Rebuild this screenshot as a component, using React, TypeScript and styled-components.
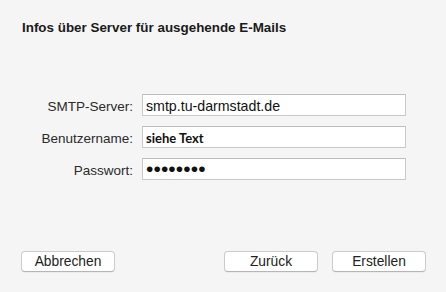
import React from "react";
import styled, { createGlobalStyle } from "styled-components";

const Global = createGlobalStyle`
  html, body { margin: 0; padding: 0; background: #f5f5f5; }
  body { font-family: "Liberation Sans", Arial, sans-serif; }
`;

const Window = styled.div`
  width: 446px;
  height: 292px;
  box-sizing: border-box;
  background: #f5f5f5;
  display: flex;
  flex-direction: column;
  padding-top: 20px;
`;

const Title = styled.h1`
  margin: 0 0 0 22px;
  font-size: 13.4px;
  line-height: 16px;
  font-weight: bold;
  color: #1a1a1a;
`;

const Form = styled.div`
  margin-top: 58px;
  display: grid;
  grid-template-columns: 133px 264px;
  column-gap: 9px;
  row-gap: 10px;
`;

const Label = styled.label`
  font-size: 13.5px;
  color: #2a2a2a;
  text-align: right;
  align-self: center;
  padding-top: 2px;
`;

const Field = styled.div<{ $variant?: "server" | "user" | "secret" }>`
  height: 22px;
  box-sizing: border-box;
  background: #ffffff;
  border: 1px solid #c9c9c9;
  border-top-color: #bdbdbd;
  display: flex;
  align-items: center;
  padding-left: 3px;
  padding-top: ${(p) => (p.$variant === "secret" ? "0" : "1px")};
  color: #111;
  white-space: nowrap;
  overflow: hidden;
  font-family: ${(p) =>
    p.$variant === "user"
      ? `Lato, "Open Sans", sans-serif`
      : `"Liberation Sans", Arial, sans-serif`};
  font-weight: ${(p) => (p.$variant === "user" ? 700 : 400)};
  font-size: ${(p) =>
    p.$variant === "secret" ? "21px" : p.$variant === "user" ? "13px" : "14.2px"};
  letter-spacing: ${(p) => (p.$variant === "secret" ? "0.1px" : "0")};
`;

const Footer = styled.div`
  margin-top: auto;
  margin-bottom: 20px;
  display: flex;
  padding: 0 20px 0 21px;
  gap: 14px;
`;

const Button = styled.button<{ $push?: boolean }>`
  width: 94px;
  height: 21px;
  box-sizing: border-box;
  background: #ffffff;
  border: 1px solid #cbcbcb;
  border-bottom-color: #b5b5b5;
  border-radius: 4px;
  font-family: "Liberation Sans", Arial, sans-serif;
  font-size: 13.8px;
  color: #222;
  padding: 0;
  line-height: 18px;
  margin-left: ${(p) => (p.$push ? "auto" : "0")};
  box-shadow: 0 0.5px 0.5px rgba(0, 0, 0, 0.08);
`;

export default function App() {
  return (
    <>
      <Global />
      <Window>
        <Title>Infos über Server für ausgehende E-Mails</Title>
        <Form>
          <Label>SMTP-Server:</Label>
          <Field $variant="server">smtp.tu-darmstadt.de</Field>
          <Label>Benutzername:</Label>
          <Field $variant="user">siehe Text</Field>
          <Label>Passwort:</Label>
          <Field $variant="secret">••••••••</Field>
        </Form>
        <Footer>
          <Button>Abbrechen</Button>
          <Button $push>Zurück</Button>
          <Button>Erstellen</Button>
        </Footer>
      </Window>
    </>
  );
}
